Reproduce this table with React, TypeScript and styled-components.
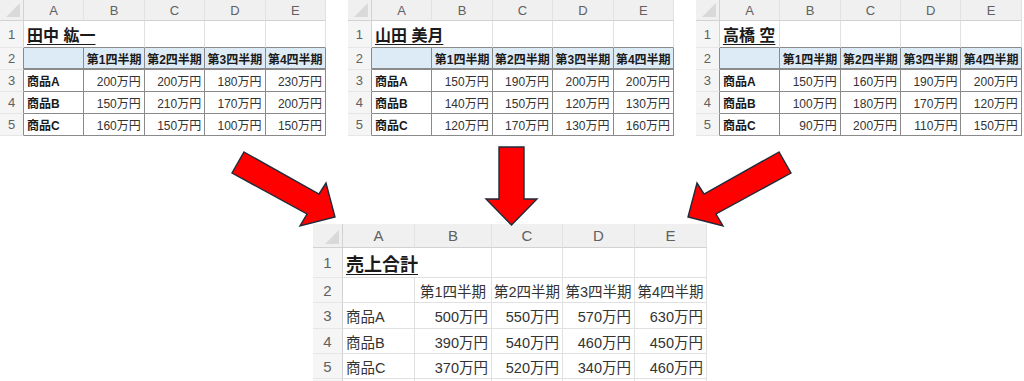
import styled, { createGlobalStyle } from "styled-components";

type Variant = "small" | "large";

type SheetData = {
  title: string;
  titleSpan: number;
  rows: { label: string; values: number[] }[];
};

const QUARTERS = ["第1四半期", "第2四半期", "第3四半期", "第4四半期"];
const LETTERS = ["A", "B", "C", "D", "E"];

const people: SheetData[] = [
  {
    title: "田中 紘一",
    titleSpan: 2,
    rows: [
      { label: "商品A", values: [200, 200, 180, 230] },
      { label: "商品B", values: [150, 210, 170, 200] },
      { label: "商品C", values: [160, 150, 100, 150] },
    ],
  },
  {
    title: "山田 美月",
    titleSpan: 2,
    rows: [
      { label: "商品A", values: [150, 190, 200, 200] },
      { label: "商品B", values: [140, 150, 120, 130] },
      { label: "商品C", values: [120, 170, 130, 160] },
    ],
  },
  {
    title: "高橋 空",
    titleSpan: 1,
    rows: [
      { label: "商品A", values: [150, 160, 190, 200] },
      { label: "商品B", values: [100, 180, 170, 120] },
      { label: "商品C", values: [90, 200, 110, 150] },
    ],
  },
];

// 合計は3人分を足して出す
const total: SheetData = {
  title: "売上合計",
  titleSpan: 2,
  rows: people[0].rows.map((r, i) => ({
    label: r.label,
    values: r.values.map((_, q) => people.reduce((s, p) => s + p.rows[i].values[q], 0)),
  })),
};

const layout = {
  small: {
    cols: "24px repeat(5, 60.4px)",
    rows: "21px 27px 22px 22px 22px 22px",
    head: 13,
    body: 12,
    title: 16,
  },
  large: {
    cols: "30px 72px 77px 71px 72px 72px",
    rows: "24px 30px 25px 26px 25px 25px 25px",
    head: 15,
    body: 14.5,
    title: 18,
  },
};

const DARK = "#8a8a8a";
const GRID = "#e1e1e1";
const HEAD_LINE = "#d2d2d2";

export default function App() {
  return (
    <Page>
      <GlobalStyle />
      <TopRow>
        {people.map((p) => (
          <Sheet key={p.title} data={p} variant="small" boxed />
        ))}
      </TopRow>
      <ArrowBand>
        <svg width="1024" height="88" viewBox="0 136 1024 88">
          <Arrow points="244,152 319,194 326,183 335,217 300,226 307,214 232,173" />
          <Arrow points="499,147 524,147 524,199 537,199 511.5,225 486,199 499,199" />
          <Arrow points="779,152 704,194 697,183 688,217 723,226 716,214 791,173" />
        </svg>
      </ArrowBand>
      <BottomRow>
        <Sheet data={total} variant="large" />
      </BottomRow>
    </Page>
  );
}

function Sheet({ data, variant, boxed = false }: { data: SheetData; variant: Variant; boxed?: boolean }) {
  const v = variant;
  const line = (on: boolean) => (boxed && on ? DARK : GRID);
  return (
    <Grid $v={v}>
      <Corner />
      {LETTERS.map((l) => (
        <ColHead key={l} $v={v}>
          {l}
        </ColHead>
      ))}

      <RowHead $v={v} $right={HEAD_LINE}>1</RowHead>
      <Title $v={v} $span={data.titleSpan} $bottom={line(true)}>
        {data.title}
      </Title>
      {Array.from({ length: 5 - data.titleSpan }).map((_, i) => (
        <Cell key={i} $v={v} $right={GRID} $bottom={line(true)} />
      ))}

      <RowHead $v={v} $right={boxed ? DARK : HEAD_LINE}>2</RowHead>
      <Cell $v={v} $right={line(true)} $bottom={line(true)} $thick={boxed} $fill={boxed} />
      {QUARTERS.map((q) => (
        <Cell key={q} $v={v} $align="center" $bold={boxed} $fill={boxed} $right={line(true)} $bottom={line(true)} $thick={boxed}>
          {q}
        </Cell>
      ))}

      {data.rows.map((r, i) => (
        <Row key={r.label}>
          <RowHead $v={v} $right={boxed ? DARK : HEAD_LINE}>{i + 3}</RowHead>
          <Cell $v={v} $bold={boxed} $right={line(true)} $bottom={line(true)}>
            {r.label}
          </Cell>
          {r.values.map((n, q) => (
            <Cell key={q} $v={v} $align="right" $right={line(true)} $bottom={line(true)}>
              {n}万円
            </Cell>
          ))}
        </Row>
      ))}

      {/* 次の行は端で切れるので番号なし */}
      {v === "large" && (
        <Row>
          <RowHead $v={v} $right={HEAD_LINE} />
          {LETTERS.map((l) => (
            <Cell key={l} $v={v} $right={GRID} $bottom={GRID} />
          ))}
        </Row>
      )}
    </Grid>
  );
}

const GlobalStyle = createGlobalStyle`
  body {
    margin: 0;
    background: #ffffff;
    font-family: "Liberation Sans", "Noto Sans CJK JP", sans-serif;
  }
`;

const Page = styled.div`
  width: 1024px;
  height: 381px;
  overflow: hidden;
  display: flex;
  flex-direction: column;
  background: #ffffff;
`;

const TopRow = styled.div`
  display: flex;
  gap: 22px;
`;

const ArrowBand = styled.div`
  height: 88px;
  position: relative;
  z-index: 1;

  svg {
    display: block;
    overflow: visible;
  }
`;

const Arrow = styled.polygon`
  fill: #ff0000;
  stroke: #1e2b38;
  stroke-width: 1.4;
  stroke-linejoin: miter;
`;

const BottomRow = styled.div`
  padding-left: 313px;
`;

const Grid = styled.div<{ $v: Variant }>`
  display: grid;
  grid-template-columns: ${(p) => layout[p.$v].cols};
  grid-template-rows: ${(p) => layout[p.$v].rows};
  background: #ffffff;
  color: #262626;
`;

const Row = styled.div`
  display: contents;
`;

const Corner = styled.div`
  position: relative;
  background: #f0f0f0;
  border-right: 1px solid ${HEAD_LINE};
  border-bottom: 1px solid ${HEAD_LINE};
  box-sizing: border-box;

  &::after {
    content: "";
    position: absolute;
    right: 3px;
    bottom: 3px;
    width: 14px;
    height: 14px;
    background: #d9d9d9;
    clip-path: polygon(100% 0, 100% 100%, 0 100%);
  }
`;

const ColHead = styled.div<{ $v: Variant }>`
  display: flex;
  align-items: center;
  justify-content: center;
  background: #f0f0f0;
  color: #616161;
  font-size: ${(p) => layout[p.$v].head}px;
  border-right: 1px solid #e2e2e2;
  border-bottom: 1px solid ${HEAD_LINE};
  box-sizing: border-box;
`;

const RowHead = styled.div<{ $v: Variant; $right: string }>`
  display: flex;
  align-items: center;
  justify-content: center;
  background: #f5f5f5;
  color: #616161;
  font-size: ${(p) => layout[p.$v].head}px;
  border-right: 1px solid ${(p) => p.$right};
  border-bottom: 1px solid #e6e6e6;
  box-sizing: border-box;
`;

const Cell = styled.div<{
  $v: Variant;
  $align?: "left" | "center" | "right";
  $bold?: boolean;
  $fill?: boolean;
  $thick?: boolean;
  $right: string;
  $bottom: string;
}>`
  display: flex;
  align-items: center;
  justify-content: ${(p) =>
    p.$align === "right" ? "flex-end" : p.$align === "center" ? "center" : "flex-start"};
  padding: 0 3px;
  white-space: nowrap;
  overflow: hidden;
  font-size: ${(p) => layout[p.$v].body}px;
  font-weight: ${(p) => (p.$bold ? 700 : 400)};
  color: ${(p) => (p.$bold ? "#1a1a1a" : "#333333")};
  background: ${(p) => (p.$fill ? "#ddebf7" : "transparent")};
  border-right: 1px solid ${(p) => p.$right};
  border-bottom: ${(p) => (p.$thick ? 2 : 1)}px solid ${(p) => p.$bottom};
  box-sizing: border-box;
`;

const Title = styled.div<{ $v: Variant; $span: number; $bottom: string }>`
  grid-column: span ${(p) => p.$span};
  display: flex;
  align-items: center;
  padding: 0 3px;
  white-space: nowrap;
  font-size: ${(p) => layout[p.$v].title}px;
  font-weight: 700;
  color: #1a1a1a;
  text-decoration: underline;
  text-underline-offset: 3px;
  border-right: 1px solid ${GRID};
  border-bottom: 1px solid ${(p) => p.$bottom};
  box-sizing: border-box;
`;
